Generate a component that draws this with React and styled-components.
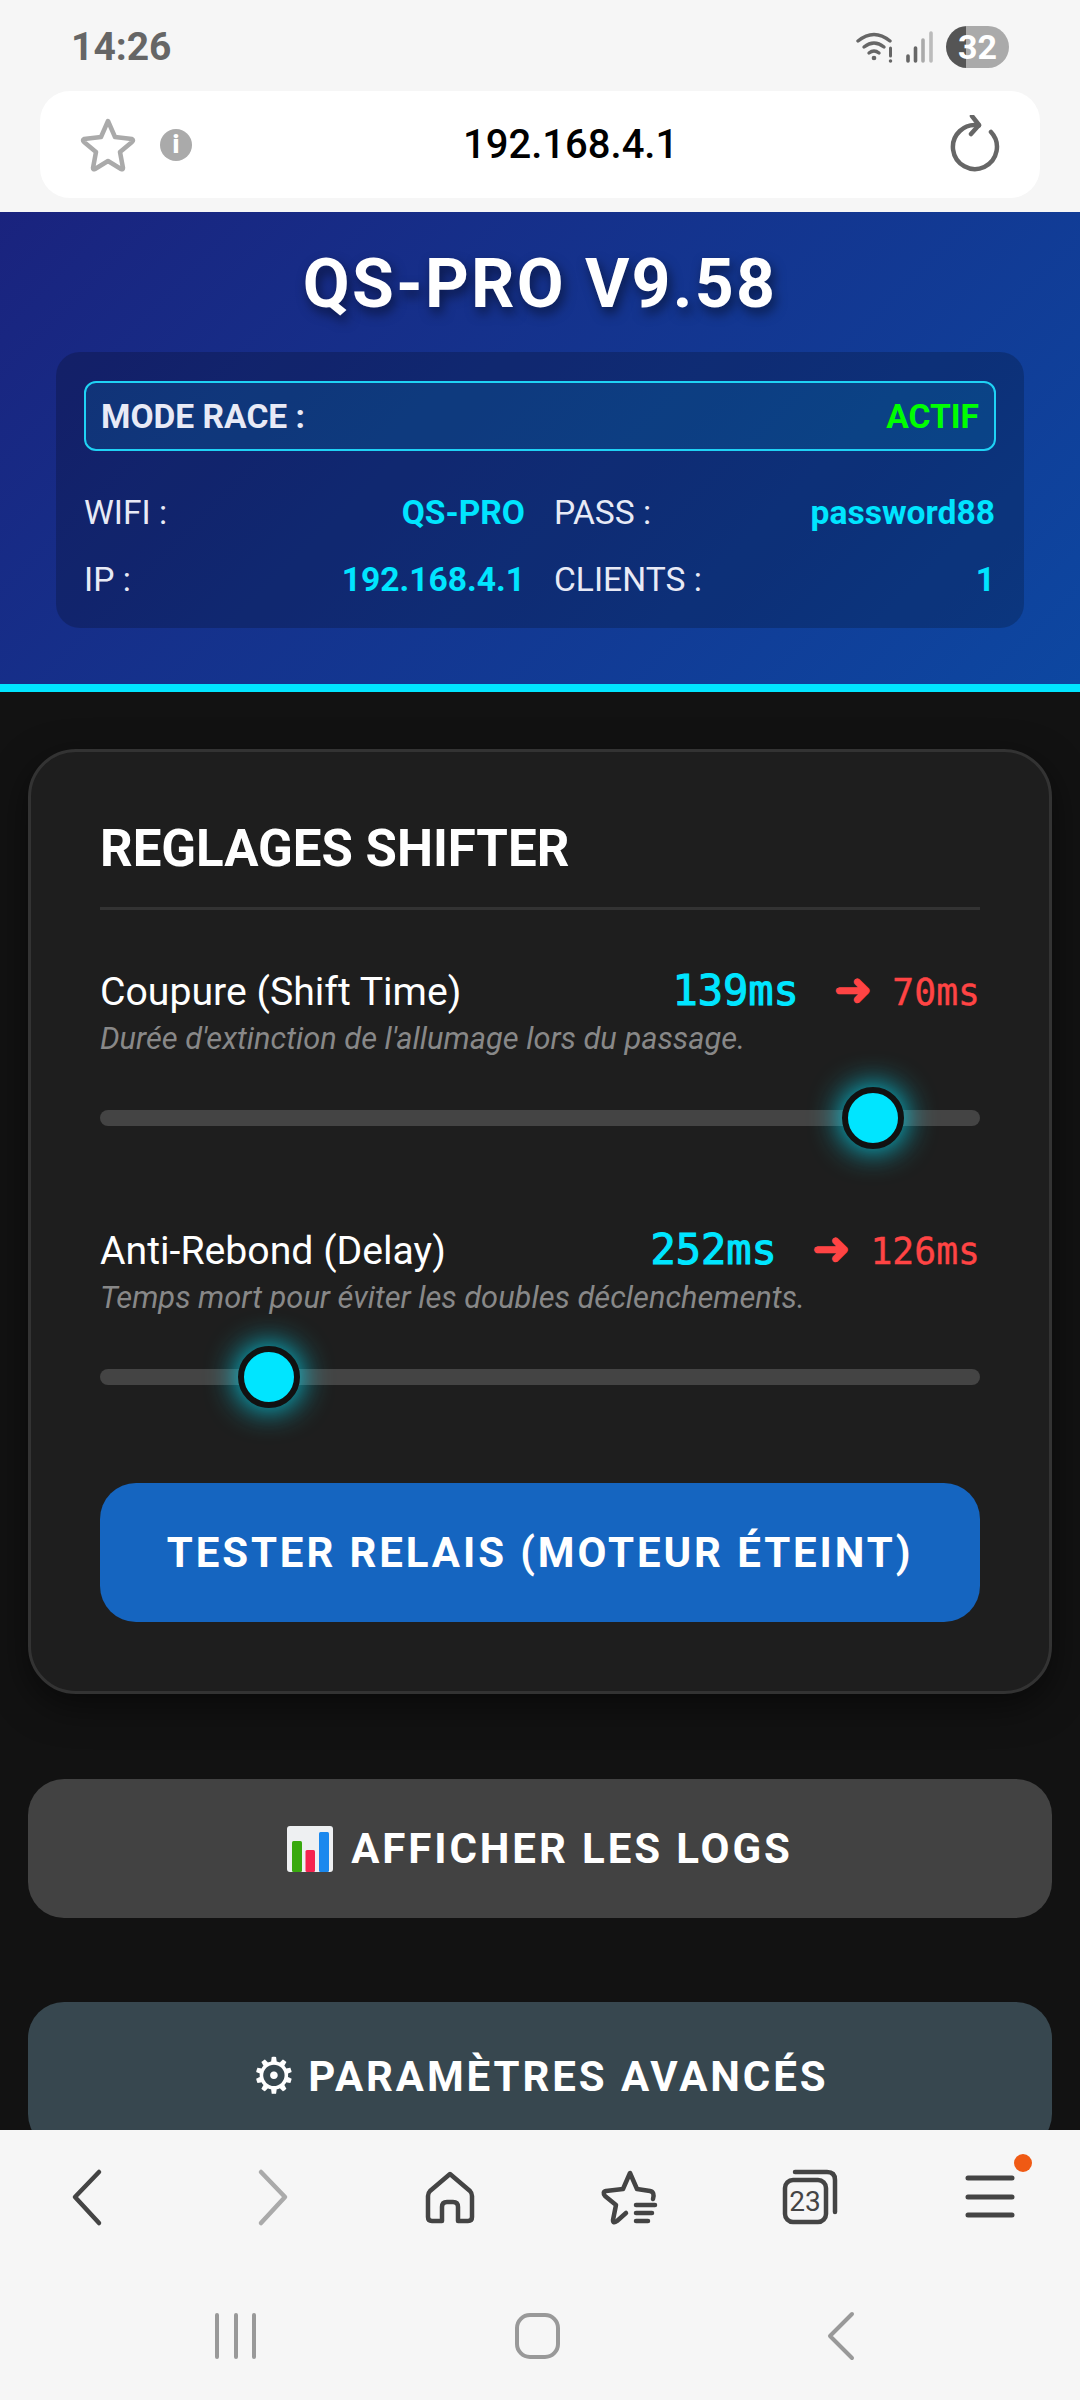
import React from "react";
import styled, { createGlobalStyle } from "styled-components";

const Global = createGlobalStyle`
  html, body { margin: 0; padding: 0; background: #f6f6f6; }
  * { box-sizing: border-box; }
`;

const Phone = styled.div`
  width: 1080px;
  height: 2400px;
  display: flex;
  flex-direction: column;
  overflow: hidden;
  font-family: Roboto, "Liberation Sans", sans-serif;
  background: #f6f6f6;
`;

/* Android status bar */
const StatusBar = styled.div`
  height: 91px;
  flex: none;
  display: flex;
  align-items: flex-start;
  justify-content: space-between;
  padding: 26px 71px 0 71px;
`;
const Clock = styled.span`
  font-size: 39px;
  line-height: 42px;
  font-weight: 700;
  color: #666;
`;
const StatusIcons = styled.div`
  display: flex;
  align-items: center;
  gap: 8px;
  height: 42px;
`;
const Battery = styled.div`
  width: 63px;
  height: 42px;
  margin-left: 4px;
  border-radius: 21px;
  background: linear-gradient(90deg, #555 0 20px, #aaa 20px);
  color: #fff;
  font-size: 34px;
  font-weight: 700;
  line-height: 42px;
  text-align: center;
`;

/* Browser address bar */
const UrlStrip = styled.div`
  height: 121px;
  flex: none;
  padding: 0 40px 14px;
`;
const UrlBar = styled.div`
  height: 107px;
  background: #fff;
  border-radius: 30px;
  display: grid;
  grid-template-columns: 383px auto 1fr;
  align-items: center;
  padding: 0 40px;
`;
const UrlLeft = styled.div`
  display: flex;
  align-items: center;
  gap: 24px;
`;
const InfoDot = styled.span`
  width: 32px;
  height: 32px;
  border-radius: 50%;
  background: #aaa;
  color: #fff;
  font-size: 25px;
  font-weight: 900;
  line-height: 32px;
  text-align: center;
`;
const UrlText = styled.span`
  font-size: 40px;
  font-weight: 500;
  color: #000;
`;
const UrlRight = styled.div`
  display: flex;
  justify-content: flex-end;
`;

/* Page served by the device */
const Web = styled.main`
  flex: 1;
  min-height: 0;
  overflow: hidden;
  background: #121212;
`;
const Header = styled.header`
  background: linear-gradient(135deg, #1a237e, #0d47a1);
  border-bottom: 8px solid #00e5ff;
  padding: 33px 56px 56px;
`;
const Title = styled.h1`
  margin: 0 0 29px;
  font-size: 68px;
  line-height: 78px;
  font-weight: 700;
  letter-spacing: 2.2px;
  text-align: center;
  color: #fff;
  text-shadow: 3px 6px 12px rgba(0, 0, 0, 0.5);
`;
const InfoPanel = styled.section`
  background: rgba(0, 0, 0, 0.2);
  border-radius: 24px;
  padding: 29px 28px 0;
  height: 276px;
`;
const ModeBox = styled.div`
  height: 70px;
  display: flex;
  align-items: center;
  justify-content: space-between;
  padding: 0 15px;
  border: 2.5px solid #1fd2f5;
  border-radius: 12px;
  background: rgba(0, 229, 255, 0.1);
  font-size: 33.6px;
  font-weight: 700;
  color: #e8eaf6;
`;
const ActiveTag = styled.span`
  color: #00ff00;
`;
const InfoGrid = styled.div`
  display: grid;
  grid-template-columns: 441px 441px;
  column-gap: 29px;
  row-gap: 28px;
  margin-top: 42px;
`;
const InfoItem = styled.div`
  display: flex;
  justify-content: space-between;
  font-size: 33.6px;
  line-height: 39px;
  color: #e8eaf6;
`;
const InfoValue = styled.b`
  color: #00e5ff;
  font-weight: 700;
`;

const Card = styled.section`
  margin: 57px 28px 0;
  height: 945px;
  background: #1e1e1e;
  border: 3px solid #333;
  border-radius: 48px;
  padding: 69px 69px;
  box-shadow: 0 12px 36px rgba(0, 0, 0, 0.5);
`;
const CardTitle = styled.h2`
  margin: 0;
  font-size: 51px;
  line-height: 56px;
  font-weight: 700;
  color: #fff;
  padding-bottom: 30px;
  border-bottom: 3px solid #333;
`;
const Setting = styled.div`
  margin-top: ${(p) => p.$gap}px;
`;
const SettingHead = styled.div`
  display: flex;
  align-items: baseline;
  justify-content: space-between;
`;
const SettingName = styled.span`
  font-size: 39.2px;
  line-height: 46px;
  color: #fff;
`;
const Values = styled.span`
  display: flex;
  align-items: baseline;
`;
const Ms = styled.span`
  font-family: "DejaVu Sans Mono", monospace;
  font-size: 42px;
  font-weight: 400;
  -webkit-text-stroke: 1.1px #00e5ff;
  color: #00e5ff;
`;
const Arrow = styled.span`
  font-family: "DejaVu Sans", sans-serif;
  font-size: 46px;
  line-height: 46px;
  -webkit-text-stroke: 1.2px #ff4444;
  color: #ff4444;
  margin: 0 20px 0 35px;
`;
const Target = styled.span`
  font-family: "DejaVu Sans Mono", monospace;
  font-size: 36.4px;
  -webkit-text-stroke: 0.4px #ff4444;
  color: #ff4444;
`;
const Hint = styled.p`
  margin: 6px 0 0;
  font-size: 30.8px;
  line-height: 36px;
  font-style: italic;
  color: #888;
`;
const Range = styled.input`
  display: block;
  width: 880px;
  height: 62px;
  margin: 30px 0 0;
  background: transparent;
  appearance: none;
  -webkit-appearance: none;

  &::-webkit-slider-runnable-track {
    height: 16px;
    border-radius: 8px;
    background: #444;
  }
  &::-webkit-slider-thumb {
    -webkit-appearance: none;
    width: 62px;
    height: 62px;
    margin-top: -23px;
    border-radius: 50%;
    background: #00e5ff;
    border: 6px solid #111;
    box-shadow: 0 0 32px #00e5ff;
  }
`;
const ActionButton = styled.button`
  display: flex;
  align-items: center;
  justify-content: center;
  gap: ${(p) => p.$gap || 0}px;
  width: 100%;
  height: ${(p) => p.$h || 139}px;
  flex: none;
  border: 0;
  border-radius: 36px;
  background: ${(p) => p.$bg};
  color: #fff;
  font-family: inherit;
  font-size: 42px;
  font-weight: 700;
  letter-spacing: 2.9px;
  padding: 0;
`;
const TestButton = styled(ActionButton)`
  margin-top: 75px;
`;
const WideActions = styled.div`
  display: flex;
  flex-direction: column;
  gap: 84px;
  margin: 85px 28px 0;
`;
const GearGlyph = styled.span`
  font-family: "DejaVu Sans", sans-serif;
  font-size: 50px;
  font-weight: 400;
  letter-spacing: 0;
`;

/* Browser toolbar and Android navigation */
const BottomBar = styled.footer`
  flex: none;
  height: 270px;
  background: #f6f6f6;
`;
const NavRow = styled.nav`
  display: grid;
  grid-template-columns: repeat(6, 180px);
  height: 134px;
  padding-top: 37px;
`;
const NavSlot = styled.div`
  position: relative;
  display: flex;
  justify-content: center;
  height: 60px;
`;
const Badge = styled.span`
  position: absolute;
  left: 114px;
  top: -13px;
  width: 18px;
  height: 18px;
  border-radius: 50%;
  background: #f05a14;
`;
const SystemRow = styled.div`
  display: grid;
  grid-template-columns: repeat(3, 302px);
  padding: 47px 0 0 85px;
`;
const SystemSlot = styled.div`
  display: flex;
  justify-content: center;
`;
const Icon = styled.svg`
  display: block;
  flex: none;
  fill: none;
  stroke-linecap: round;
  stroke-linejoin: round;
`;

const settings = [
  { name: "Coupure (Shift Time)", cur: "139ms", next: "70ms", hint: "Durée d'extinction de l'allumage lors du passage.", pos: 907, gap: 56 },
  { name: "Anti-Rebond (Delay)", cur: "252ms", next: "126ms", hint: "Temps mort pour éviter les doubles déclenchements.", pos: 169, gap: 76 },
];

const WifiIcon = () => (
  <Icon width="40" height="32" viewBox="0 0 40 32" stroke="#666" strokeWidth="3.4">
    <path d="M2 10Q18 -3 34 10" />
    <path d="M8 16Q18 8 28 16" />
    <path d="M13 22Q18 18 23 22" />
    <circle cx="18" cy="27" r="1.6" fill="#666" strokeWidth="1.5" />
    <path d="M34.5 17V25" strokeWidth="3" />
    <circle cx="34.5" cy="30" r="1" fill="#666" strokeWidth="1.5" />
  </Icon>
);

const SignalIcon = () => (
  <Icon width="30" height="32" viewBox="0 0 30 32" strokeWidth="3.6">
    <path d="M4 25V30" stroke="#666" />
    <path d="M11.5 17V30" stroke="#666" />
    <path d="M19 9V30" stroke="#aaa" />
    <path d="M27 2V30" stroke="#bbb" />
  </Icon>
);

const Star = () => (
  <Icon width="56" height="54" viewBox="0 0 56 54" stroke="#aaa" strokeWidth="4.5">
    <path d="M28 3L35 19L52 21Q54 22 52 24L40 34L43 50Q43 52 41 51L28 43L15 51Q13 52 13 50L16 34L4 24Q2 22 4 21L21 19Z" />
  </Icon>
);

const Reload = () => (
  <Icon width="54" height="60" viewBox="0 0 54 60" stroke="#666" strokeWidth="4.5">
    <path d="M45 17A22 22 0 1 1 33 10.4" />
    <path d="M26 1L33 10L25 19" />
  </Icon>
);

const BarChart = () => (
  <Icon width="46" height="46" viewBox="0 0 46 46">
    <rect width="46" height="46" rx="3" fill="#eef0f2" />
    <rect x="5" y="15" width="10" height="31" rx="1.5" fill="#39a90f" />
    <rect x="18.5" y="24" width="9.5" height="22" rx="1.5" fill="#f5234f" />
    <rect x="32" y="6" width="10" height="40" rx="1.5" fill="#1a88ee" />
  </Icon>
);

const NavIcon = ({ children, stroke = "#444", width = 4.5 }) => (
  <Icon width="60" height="60" viewBox="0 0 60 60" stroke={stroke} strokeWidth={width}>
    {children}
  </Icon>
);

const TabCount = styled.text`
  font-family: Roboto, sans-serif;
  font-size: 28px;
  fill: #444;
  stroke: none;
`;

const SystemIcon = ({ children }) => (
  <Icon width="60" height="50" viewBox="0 0 60 50" stroke="#999" strokeWidth="4">
    {children}
  </Icon>
);

export default function App() {
  return (
    <Phone>
      <Global />
      <StatusBar>
        <Clock>14:26</Clock>
        <StatusIcons>
          <WifiIcon />
          <SignalIcon />
          <Battery>32</Battery>
        </StatusIcons>
      </StatusBar>

      <UrlStrip>
        <UrlBar>
          <UrlLeft>
            <Star />
            <InfoDot>i</InfoDot>
          </UrlLeft>
          <UrlText>192.168.4.1</UrlText>
          <UrlRight>
            <Reload />
          </UrlRight>
        </UrlBar>
      </UrlStrip>

      <Web>
        <Header>
          <Title>QS-PRO V9.58</Title>
          <InfoPanel>
            <ModeBox>
              <span>MODE RACE :</span>
              <ActiveTag>ACTIF</ActiveTag>
            </ModeBox>
            <InfoGrid>
              <InfoItem>WIFI :<InfoValue>QS-PRO</InfoValue></InfoItem>
              <InfoItem>PASS :<InfoValue>password88</InfoValue></InfoItem>
              <InfoItem>IP :<InfoValue>192.168.4.1</InfoValue></InfoItem>
              <InfoItem>CLIENTS :<InfoValue>1</InfoValue></InfoItem>
            </InfoGrid>
          </InfoPanel>
        </Header>

        <Card>
          <CardTitle>REGLAGES SHIFTER</CardTitle>
          {settings.map((s) => (
            <Setting key={s.name} $gap={s.gap}>
              <SettingHead>
                <SettingName>{s.name}</SettingName>
                <Values>
                  <Ms>{s.cur}</Ms>
                  <Arrow>➜</Arrow>
                  <Target>{s.next}</Target>
                </Values>
              </SettingHead>
              <Hint>{s.hint}</Hint>
              <Range type="range" min="0" max="1000" defaultValue={s.pos} />
            </Setting>
          ))}
          <TestButton $bg="#1565c0">TESTER RELAIS (MOTEUR ÉTEINT)</TestButton>
        </Card>

        <WideActions>
          <ActionButton $bg="#424242" $gap={18}>
            <BarChart />
            AFFICHER LES LOGS
          </ActionButton>
          <ActionButton $bg="#37474f" $gap={12} $h={148}>
            <GearGlyph>⚙</GearGlyph>
            PARAMÈTRES AVANCÉS
          </ActionButton>
        </WideActions>
      </Web>

      <BottomBar>
        <NavRow>
          <NavSlot>
            <NavIcon><path d="M39 5L15 30L39 56" /></NavIcon>
          </NavSlot>
          <NavSlot>
            <NavIcon stroke="#aaa"><path d="M21 5L45 30L21 56" /></NavIcon>
          </NavSlot>
          <NavSlot>
            <NavIcon>
              <path d="M30 7L50 24Q52 26 52 29V50Q52 54 48 54H38V40Q38 35 33 35H27Q22 35 22 40V54H12Q8 54 8 50V29Q8 26 10 24Z" />
            </NavIcon>
          </NavSlot>
          <NavSlot>
            <NavIcon>
              <path d="M53 32Q55 25 50 24L37 22L30 6L23 22L6 24Q2 25 5 29L16 38L13 53Q13 57 17 54L26 46" />
              <path d="M36 38H55M36 46H52M36 54H48" />
            </NavIcon>
          </NavSlot>
          <NavSlot>
            <NavIcon>
              <rect x="5" y="13" width="41" height="42" rx="8" />
              <path d="M15 5H47Q55 5 55 13V45" />
              <TabCount x="25" y="44" textAnchor="middle">23</TabCount>
            </NavIcon>
          </NavSlot>
          <NavSlot>
            <NavIcon width="5"><path d="M8 11H52M8 30H52M8 48H52" /></NavIcon>
            <Badge />
          </NavSlot>
        </NavRow>
        <SystemRow>
          <SystemSlot>
            <SystemIcon><path d="M11 4V46M30 4V46M48 4V46" /></SystemIcon>
          </SystemSlot>
          <SystemSlot>
            <SystemIcon><rect x="9" y="4" width="41" height="42" rx="13" /></SystemIcon>
          </SystemSlot>
          <SystemSlot>
            <SystemIcon><path d="M42 3L20 25L42 47" /></SystemIcon>
          </SystemSlot>
        </SystemRow>
      </BottomBar>
    </Phone>
  );
}
